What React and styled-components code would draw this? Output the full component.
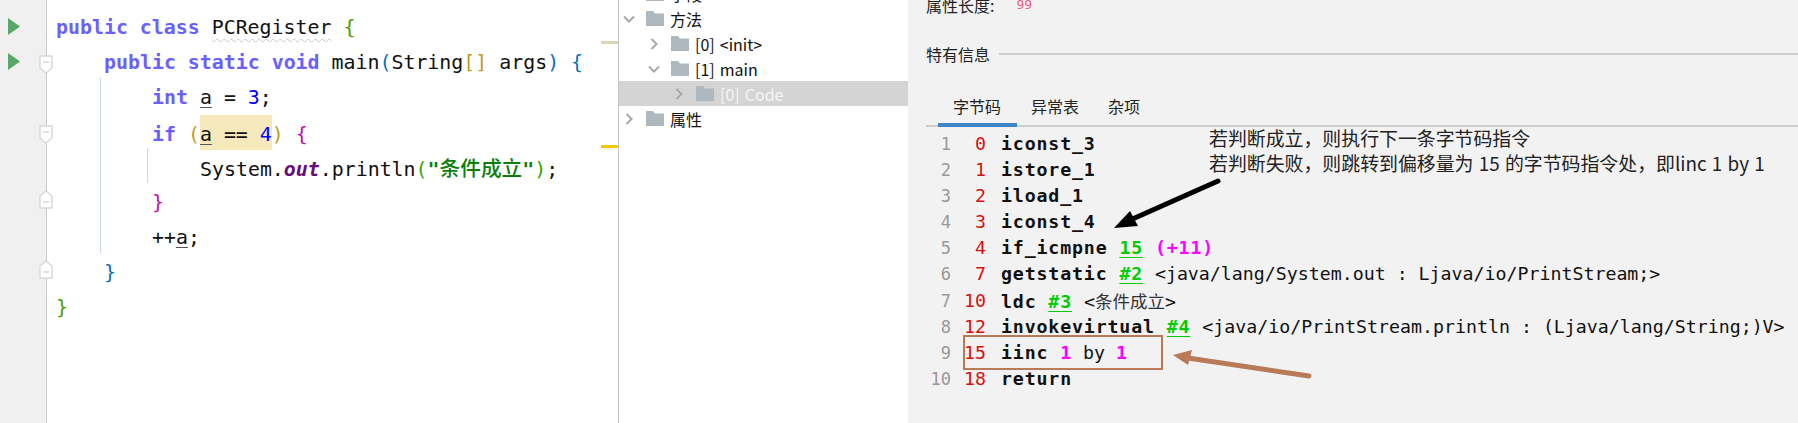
import React from 'react';
import styled, { createGlobalStyle } from 'styled-components';

const GlobalStyle = createGlobalStyle`
  html, body {
    margin: 0;
    padding: 0;
    background: #f2f2f2;
    overflow: hidden;
  }
`;

const MONO = '"DejaVu Sans Mono", "Noto Sans CJK SC", monospace';
const UI = '"Noto Sans CJK SC", "Noto Sans", sans-serif';

const Page = styled.div`
  position: relative;
  display: flex;
  width: 1798px;
  height: 423px;
  overflow: hidden;
`;

/* editor */
const Editor = styled.div`
  position: relative;
  display: flex;
  flex: 0 0 619px;
  background: #fff;
  border-right: 1px solid #c4c4c4;
  box-sizing: border-box;
`;

const Gutter = styled.div`
  position: relative;
  flex: 0 0 46px;
  background: #f0f0f0;
  border-right: 1px solid #c8c8c8;
`;

const RunIcon = styled.svg`
  position: absolute;
  left: 8px;
  top: ${p => p.$top}px;
`;

const FoldIcon = styled.svg`
  position: absolute;
  left: 39px;
  top: ${p => p.$top}px;
  transform: ${p => (p.$up ? 'scaleY(-1)' : 'none')};
`;

const Code = styled.div`
  flex: 1;
  padding: 10px 0 0 9px;
  font-family: ${MONO};
  font-size: 19.9px;
  color: #111;
`;

const CodeLine = styled.div`
  height: 35px;
  line-height: 35px;
  padding-left: ${p => p.$indent * 48}px;
  white-space: pre;
`;

const Token = styled.span`
  color: ${p => p.$color || 'inherit'};
  font-weight: ${p => (p.$bold ? 700 : 400)};
  font-style: ${p => (p.$italic ? 'italic' : 'normal')};
`;

const Keyword = styled.span`
  color: #6a60ff;
  font-weight: 700;
`;

const Squiggle = styled.span`
  text-decoration: underline wavy #c8c8c8 1px;
  text-underline-offset: 4px;
`;

const LocalVar = styled.span`
  text-decoration: underline;
  text-decoration-color: #555;
  text-underline-offset: 3px;
`;

const Highlight = styled.span`
  display: inline-block;
  height: 35px;
  line-height: 39px;
  background: #f5e9bc;
`;

const ChineseString = styled.span`
  font-family: ${UI};
  font-size: 20.7px;
  font-weight: 500;
  color: #0a7f0a;
`;

const IndentGuide = styled.div`
  position: absolute;
  left: ${p => p.$left}px;
  top: ${p => p.$top}px;
  width: 1px;
  height: ${p => p.$height}px;
  background: ${p => p.$color};
`;

const ScrollMark = styled.div`
  position: absolute;
  right: 0;
  top: ${p => p.$top}px;
  width: 17px;
  height: 3px;
  background: ${p => p.$color};
`;

/* class tree */
const Tree = styled.div`
  flex: 0 0 289px;
  background: #fff;
  font-family: ${UI};
  font-size: 16px;
  word-spacing: 1.5px;
  color: #111;
  overflow: hidden;
`;

const TreeList = styled.div`
  margin-top: -19px;
`;

const TreeRow = styled.div`
  display: flex;
  align-items: center;
  height: 25px;
  padding-left: ${p => 3 + p.$depth * 25}px;
  background: ${p => (p.$selected ? '#d4d4d4' : 'transparent')};
  color: ${p => (p.$selected ? '#f4f4f4' : 'inherit')};
  white-space: pre;
`;

const Chevron = styled.svg`
  flex: 0 0 14px;
  margin-right: 10px;
`;

const Folder = styled.svg`
  flex: 0 0 18px;
  margin-right: 6px;
`;

/* class detail */
const Detail = styled.div`
  position: relative;
  flex: 1;
  background: #f2f2f2;
  padding-left: 18px;
  font-family: ${UI};
  font-size: 16px;
  color: #222;
`;

const AttrRow = styled.div`
  display: flex;
  height: 32px;
  margin-top: -11px;
  line-height: 32px;
`;

const AttrValue = styled.span`
  margin-left: 22px;
  font-family: ${MONO};
  font-size: 13px;
  color: #ee5a86;
`;

const SectionTitle = styled.div`
  display: flex;
  align-items: center;
  gap: 9px;
  height: 24px;
  margin-top: 21px;
  &::after {
    content: '';
    flex: 1;
    height: 2px;
    background: #cdcdcd;
  }
`;

const Tabs = styled.div`
  display: flex;
  height: 36px;
  margin-top: 23px;
  padding-left: 12px;
  border-bottom: 2px solid #cdcdcd;
  box-sizing: content-box;
`;

const Tab = styled.div`
  height: 38px;
  box-sizing: border-box;
  line-height: 35px;
  white-space: nowrap;
  border-bottom: 4px solid ${p => (p.$active ? '#4285c7' : 'transparent')};
  width: ${p => p.$width}px;
  padding-left: ${p => p.$pad}px;
`;

const Bytecode = styled.div`
  padding-top: 3.5px;
  font-family: ${MONO};
  font-size: 18.25px;
  color: #111;
`;

const ByteRow = styled.div`
  display: flex;
  height: 26.2px;
  line-height: 26px;
  white-space: pre;
`;

const LineNo = styled.span`
  flex: 0 0 25px;
  text-align: right;
  font-size: 17px;
  color: #999;
`;

const Offset = styled.span`
  flex: 0 0 35px;
  text-align: right;
  color: #d80f0f;
`;

const Instr = styled.span`
  margin-left: 15px;
`;

const Bold = styled.span`
  font-weight: 700;
  letter-spacing: 0.85px;
`;

const Ref = styled(Bold)`
  color: #00cc00;
  text-decoration: underline;
  text-underline-offset: 3px;
`;

const Magenta = styled(Bold)`
  color: #ff00ff;
`;

const CnText = styled.span`
  font-family: ${UI};
  font-size: 17.5px;
  color: #333;
`;

const Callout = styled.div`
  position: absolute;
  left: 1209px;
  top: 125px;
  font-family: ${UI};
  font-size: 18.9px;
  word-spacing: 1px;
  line-height: 25px;
  color: #222;
  white-space: pre;
`;

const Marks = styled.svg`
  position: absolute;
  left: 0;
  top: 0;
  pointer-events: none;
`;

const Run = ({ top }) => (
  <RunIcon $top={top} width="12" height="17" viewBox="0 0 12 17">
    <path d="M0 0L12 8.5L0 17Z" fill="#59a869" />
  </RunIcon>
);

const Fold = ({ top, up }) => (
  <FoldIcon $top={top} $up={up} width="16" height="19" viewBox="0 0 16 19">
    <path d="M1 1H13V13L7 18L1 13Z" fill="#fff" stroke="#d8d8d8" strokeWidth="1.4" />
    <path d="M4 7H10" stroke="#c4c4c4" strokeWidth="1" />
  </FoldIcon>
);

const Arrow = ({ open }) => (
  <Chevron width="14" height="14" viewBox="0 0 14 14">
    <path
      d={open ? 'M2 4.5L7 9.5L12 4.5' : 'M4.5 2L9.5 7L4.5 12'}
      fill="none"
      stroke="#a8a8a8"
      strokeWidth="2"
    />
  </Chevron>
);

const FolderIcon = () => (
  <Folder width="18" height="15" viewBox="0 0 18 15">
    <path d="M0 0H7L9 2.5H18V15H0Z" fill="#afb8bf" />
  </Folder>
);

const treeItems = [
  { depth: 0, open: true, label: '字段' },
  { depth: 0, open: true, label: '方法' },
  { depth: 1, open: false, label: '[0] <init>' },
  { depth: 1, open: true, label: '[1] main' },
  { depth: 2, open: false, label: '[0] Code', selected: true },
  { depth: 0, open: false, label: '属性' },
];

const Row = ({ no, offset, children }) => (
  <ByteRow>
    <LineNo>{no}</LineNo>
    <Offset>{offset}</Offset>
    <Instr>{children}</Instr>
  </ByteRow>
);

const App = () => (
  <Page>
    <GlobalStyle />
    <Editor>
      <Gutter>
        <Run top={18} />
        <Run top={53} />
        <Fold top={55} />
        <Fold top={125} />
        <Fold top={190} up />
        <Fold top={260} up />
      </Gutter>
      <IndentGuide $left={100} $top={78} $height={175} $color="#cbd6e8" />
      <IndentGuide $left={147} $top={148} $height={35} $color="#e8c8e8" />
      <ScrollMark $top={41} $color="#dfd4b4" />
      <ScrollMark $top={145} $color="#f0c800" />
      <Code>
        <CodeLine $indent={0}>
          <Keyword>public class</Keyword> <Squiggle>PCRegister</Squiggle>{' '}
          <Token $color="#4c9a00">{'{'}</Token>
        </CodeLine>
        <CodeLine $indent={1}>
          <Keyword>public static void</Keyword> main
          <Token $color="#0a6fb0">(</Token>String<Token $color="#c49a1a">[]</Token> args
          <Token $color="#0a6fb0">)</Token> <Token $color="#0a6fb0">{'{'}</Token>
        </CodeLine>
        <CodeLine $indent={2}>
          <Keyword>int</Keyword> <LocalVar>a</LocalVar> = <Token $color="#0000ff">3</Token>;
        </CodeLine>
        <CodeLine $indent={2}>
          <Keyword>if</Keyword> <Token $color="#c49a1a">(</Token>
          <Highlight>
            <LocalVar>a</LocalVar> == <Token $color="#0000ff">4</Token>
          </Highlight>
          <Token $color="#c49a1a">)</Token> <Token $color="#c0119e">{'{'}</Token>
        </CodeLine>
        <CodeLine $indent={3}>
          System.<Token $color="#660e7a" $bold $italic>out</Token>.println
          <Token $color="#3aa300">(</Token>
          <Token $color="#0a7f0a" $bold>"</Token>
          <ChineseString>条件成立</ChineseString>
          <Token $color="#0a7f0a" $bold>"</Token>
          <Token $color="#3aa300">)</Token>;
        </CodeLine>
        <CodeLine $indent={2}>
          <Token $color="#c0119e">{'}'}</Token>
        </CodeLine>
        <CodeLine $indent={2}>
          ++<LocalVar>a</LocalVar>;
        </CodeLine>
        <CodeLine $indent={1}>
          <Token $color="#0a6fb0">{'}'}</Token>
        </CodeLine>
        <CodeLine $indent={0}>
          <Token $color="#4c9a00">{'}'}</Token>
        </CodeLine>
      </Code>
    </Editor>

    <Tree>
      <TreeList>
        {treeItems.map(item => (
          <TreeRow key={item.depth + item.label} $depth={item.depth} $selected={item.selected}>
            <Arrow open={item.open} />
            <FolderIcon />
            {item.label}
          </TreeRow>
        ))}
      </TreeList>
    </Tree>

    <Detail>
      <AttrRow>
        属性长度:
        <AttrValue>99</AttrValue>
      </AttrRow>
      <SectionTitle>特有信息</SectionTitle>
      <Tabs>
        <Tab $active $width={79} $pad={15}>字节码</Tab>
        <Tab $width={77} $pad={14}>异常表</Tab>
        <Tab $width={60} $pad={14}>杂项</Tab>
      </Tabs>
      <Bytecode>
        <Row no="1" offset="0"><Bold>iconst_3</Bold></Row>
        <Row no="2" offset="1"><Bold>istore_1</Bold></Row>
        <Row no="3" offset="2"><Bold>iload_1</Bold></Row>
        <Row no="4" offset="3"><Bold>iconst_4</Bold></Row>
        <Row no="5" offset="4">
          <Bold>if_icmpne </Bold><Ref>15</Ref><Bold> </Bold><Magenta>(+11)</Magenta>
        </Row>
        <Row no="6" offset="7">
          <Bold>getstatic </Bold><Ref>#2</Ref><Bold> </Bold>
          {'<java/lang/System.out : Ljava/io/PrintStream;>'}
        </Row>
        <Row no="7" offset="10">
          <Bold>ldc </Bold><Ref>#3</Ref><Bold> </Bold>
          {'<'}<CnText>条件成立</CnText>{'>'}
        </Row>
        <Row no="8" offset="12">
          <Bold>invokevirtual </Bold><Ref>#4</Ref><Bold> </Bold>
          {'<java/io/PrintStream.println : (Ljava/lang/String;)V>'}
        </Row>
        <Row no="9" offset="15">
          <Bold>iinc </Bold><Magenta>1</Magenta> by <Magenta>1</Magenta>
        </Row>
        <Row no="10" offset="18"><Bold>return</Bold></Row>
      </Bytecode>
    </Detail>

    <Callout>
      {'若判断成立，则执行下一条字节码指令\n若判断失败，则跳转到偏移量为 15 的字节码指令处，即linc 1 by 1'}
    </Callout>
    <Marks width="1798" height="423" viewBox="0 0 1798 423">
      <rect x="964" y="336" width="198" height="33" fill="none" stroke="#b97a57" strokeWidth="2" />
      <path d="M1218 181L1128 221" stroke="#000" strokeWidth="5" strokeLinecap="round" />
      <path d="M1114 228L1130 211L1138 226Z" fill="#000" />
      <path d="M1309 376L1188 358" stroke="#b97a57" strokeWidth="5" strokeLinecap="round" />
      <path d="M1173 355L1192 350L1188 365Z" fill="#b97a57" />
    </Marks>
  </Page>
);

export default App;
